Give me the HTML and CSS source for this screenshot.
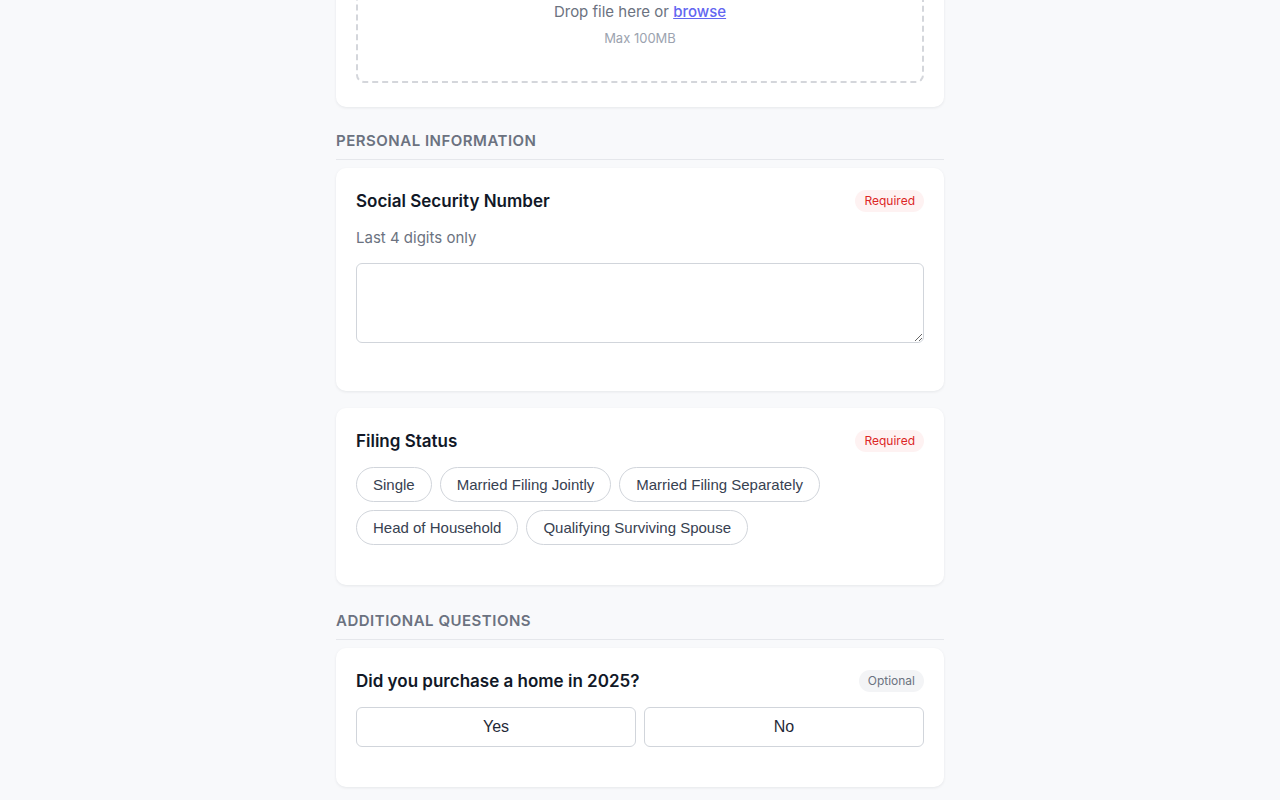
FILE: index.html
```html
<!DOCTYPE html>
<html lang="en">
<head>
    <meta charset="UTF-8">
    <meta name="viewport" content="width=device-width, initial-scale=1.0">
    <title>Tax Intake Form</title>
    <link rel="stylesheet" href="styles.css">
</head>
<body>
    <main class="form-column">
        <!-- 서류 업로드 -->
        <div class="card upload-card">
            <div class="dropzone">
                <svg class="dropzone-icon" width="40" height="40" viewBox="0 0 24 24" fill="none" stroke="#9ca3af" stroke-width="1.5" stroke-linecap="round" stroke-linejoin="round">
                    <path d="M12 16V4"/>
                    <path d="M7 9l5-5 5 5"/>
                    <path d="M4 16v3a1 1 0 0 0 1 1h14a1 1 0 0 0 1-1v-3"/>
                </svg>
                <p class="dropzone-text">Drop file here or <a href="#" class="browse-link">browse</a></p>
                <p class="dropzone-hint">Max 100MB</p>
            </div>
        </div>

        <h3 class="section-title">Personal Information</h3>

        <div class="card">
            <div class="question-header">
                <span class="question-title">Social Security Number</span>
                <span class="badge badge-required">Required</span>
            </div>
            <p class="question-help">Last 4 digits only</p>
            <textarea class="answer-text"></textarea>
        </div>

        <div class="card">
            <div class="question-header">
                <span class="question-title">Filing Status</span>
                <span class="badge badge-required">Required</span>
            </div>
            <div class="choice-list">
                <button class="choice-pill">Single</button>
                <button class="choice-pill">Married Filing Jointly</button>
                <button class="choice-pill">Married Filing Separately</button>
                <button class="choice-pill">Head of Household</button>
                <button class="choice-pill">Qualifying Surviving Spouse</button>
            </div>
        </div>

        <h3 class="section-title">Additional Questions</h3>

        <div class="card">
            <div class="question-header">
                <span class="question-title">Did you purchase a home in 2025?</span>
                <span class="badge badge-optional">Optional</span>
            </div>
            <div class="yes-no">
                <button class="yes-no-btn">Yes</button>
                <button class="yes-no-btn">No</button>
            </div>
        </div>
    </main>
</body>
</html>
```

FILE: styles.css
```css
/* 기본 */
body {
    margin: 0;
    background-color: #f8f9fb;
    font-family: Inter, "Noto Sans", sans-serif;
    color: #111827;
}

.form-column {
    width: 608px;
    margin: -107px auto 0;
    padding-bottom: 40px;
}

/* 카드 */
.card {
    background-color: #fff;
    border-radius: 10px;
    box-shadow: 0 1px 3px rgba(15, 23, 42, 0.08);
    padding: 20px 20px 40px;
    margin-bottom: 17px;
}

.upload-card {
    padding-bottom: 24px;
    margin-bottom: 0;
}

/* 업로드 영역 */
.dropzone {
    border: 2px dashed #d4d6db;
    border-radius: 8px;
    padding: 34px 20px 34px;
    text-align: center;
}

.dropzone-icon {
    display: block;
    margin: 0 auto 12px;
}

.dropzone-text {
    margin: 0;
    font-size: 15px;
    line-height: 22px;
    color: #6b7280;
}

.browse-link {
    color: #6366f1;
    font-weight: 500;
    text-decoration: underline;
}

.dropzone-hint {
    margin: 6px 0 0;
    font-size: 13px;
    line-height: 18px;
    color: #9ca3af;
}

/* 섹션 제목 */
.section-title {
    margin: 25px 0 8px;
    padding-bottom: 8px;
    border-bottom: 1px solid #e5e7eb;
    font-size: 15px;
    line-height: 21px;
    font-weight: 600;
    letter-spacing: 0.5px;
    text-transform: uppercase;
    color: #6b7280;
}

.upload-card + .section-title {
    margin-top: 23px;
}

/* 질문 */
.question-header {
    display: flex;
    align-items: center;
    justify-content: space-between;
    height: 26px;
    margin-bottom: 13px;
}

.question-title {
    font-size: 17px;
    font-weight: 600;
    color: #111827;
}

.badge {
    font-size: 12px;
    line-height: 22px;
    padding: 0 9px;
    border-radius: 999px;
}

.badge-required {
    background-color: #fef2f2;
    color: #dc2626;
}

.badge-optional {
    background-color: #f3f4f6;
    color: #6b7280;
}

.question-help {
    margin: 0 0 14px;
    font-size: 15px;
    line-height: 22px;
    color: #6b7280;
}

.answer-text {
    display: block;
    box-sizing: border-box;
    width: 100%;
    height: 80px;
    margin-bottom: 8px;
    border: 1px solid #d1d5db;
    border-radius: 6px;
    font-family: inherit;
    font-size: 15px;
}

/* 선택 버튼 */
.choice-list {
    display: flex;
    flex-wrap: wrap;
    gap: 8px;
}

.choice-pill {
    height: 35px;
    padding: 0 16px;
    background-color: #fff;
    border: 1px solid #d1d5db;
    border-radius: 999px;
    font-family: "Liberation Sans", Arial, sans-serif;
    font-size: 15px;
    color: #374151;
    cursor: pointer;
}

.yes-no {
    display: grid;
    grid-template-columns: 1fr 1fr;
    gap: 8px;
}

.yes-no-btn {
    height: 40px;
    background-color: #fff;
    border: 1px solid #d1d5db;
    border-radius: 6px;
    font-family: "Liberation Sans", Arial, sans-serif;
    font-size: 16px;
    color: #1f2937;
    cursor: pointer;
}
```
